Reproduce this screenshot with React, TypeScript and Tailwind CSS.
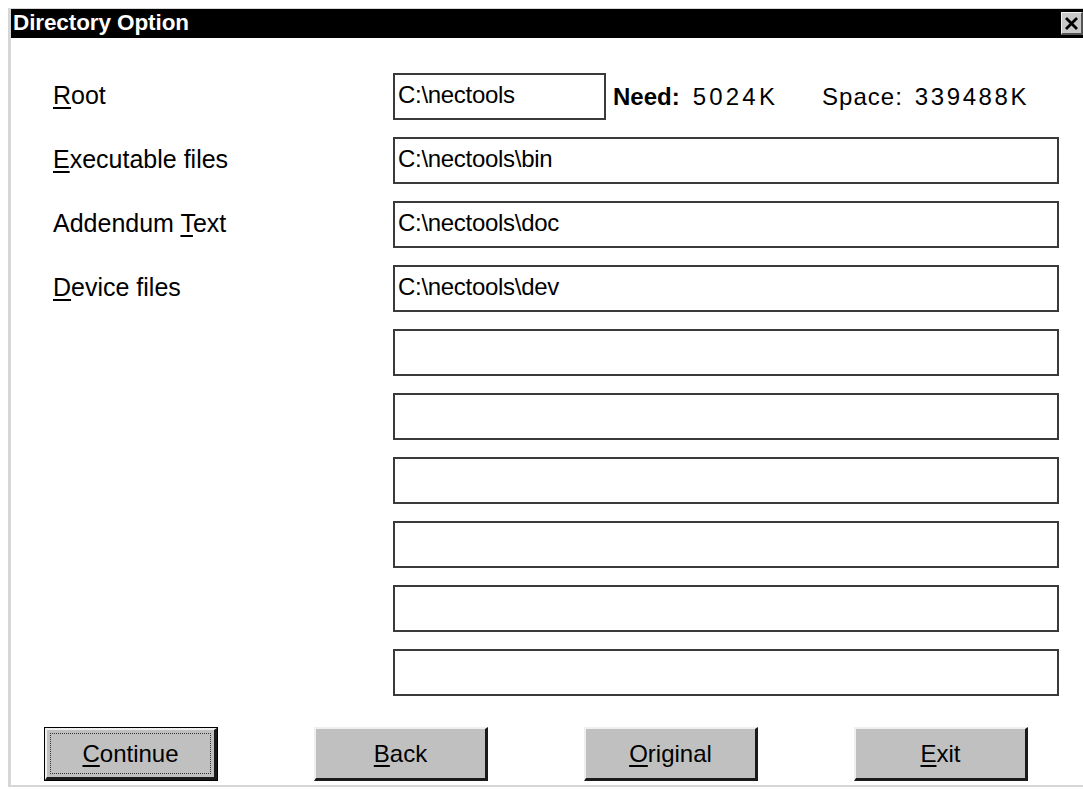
import React from 'react';

interface DirRow {
  label?: React.ReactNode;
  value: string;
}

// Letter with the keyboard-mnemonic underline
const Key: React.FC<{ children: React.ReactNode }> = ({ children }) => (
  <span className="underline underline-offset-[3px] decoration-[2px]">{children}</span>
);

const rows: DirRow[] = [
  { label: <><Key>E</Key>xecutable files</>, value: 'C:\\nectools\\bin' },
  { label: <>Addendum <Key>T</Key>ext</>, value: 'C:\\nectools\\doc' },
  { label: <><Key>D</Key>evice files</>, value: 'C:\\nectools\\dev' },
  { value: '' },
  { value: '' },
  { value: '' },
  { value: '' },
  { value: '' },
  { value: '' },
];

const PathBox: React.FC<{ value: string; wide?: boolean }> = ({ value, wide = true }) => (
  <div
    className={`${wide ? 'w-[666px]' : 'w-[213px]'} h-[47px] border-2 border-[#3a3a3a] bg-white px-[3px] pt-[6px] leading-[28px] text-[24px] text-black whitespace-nowrap tracking-[-0.3px]`}
  >
    {value}
  </div>
);

const DialogButton: React.FC<{ children: React.ReactNode; isDefault?: boolean }> = ({
  children,
  isDefault,
}) => (
  <button
    className={`w-[174px] h-[54px] bg-[#c0c0c0] text-[24px] text-black flex ${
      isDefault ? 'border border-black p-0' : ''
    }`}
  >
    <div className="flex-1 flex border-t-2 border-l-2 border-[#efefef] border-r-[3px] border-b-[3px] border-r-[#1a1a1a] border-b-[#1a1a1a]">
      <div
        className={`flex-1 flex items-center justify-center m-[3px] ${
          isDefault ? 'border border-dotted border-[#333]' : ''
        }`}
      >
        <span>{children}</span>
      </div>
    </div>
  </button>
);

const App: React.FC = () => {
  return (
    <div className="w-[1083px] h-[790px] bg-white overflow-hidden pt-[8px] pl-[8px] font-['Liberation_Sans',Arial,sans-serif]">
      <div className="h-[779px] flex flex-col border-t border-l-[3px] border-b-2 border-[#d6d6d6]">
        {/* Title bar */}
        <div className="h-[29px] bg-black flex items-center justify-between pl-[2px] pr-0">
          <span className="text-white font-bold text-[22.5px] leading-none tracking-[-0.1px]">
            Directory Option
          </span>
          <div className="w-[22px] h-[23px] bg-[#c8c8c8] border-t border-l border-[#f0f0f0] border-r-2 border-b-2 border-r-[#555] border-b-[#555] flex items-center justify-center">
            <svg width="15" height="15" viewBox="0 0 15 15">
              <path d="M2 2 L13 13 M13 2 L2 13" stroke="#000" strokeWidth="2.8" />
            </svg>
          </div>
        </div>

        {/* Path fields */}
        <div className="flex flex-col gap-[17px] pt-[35px]">
          <div className="flex items-start">
            <div className="w-[382px] pl-[42px] pt-[8px] leading-[28px] text-[25px] text-black">
              <Key>R</Key>oot
            </div>
            <PathBox value="C:\nectools" wide={false} />
            <div className="flex items-start pt-[10px] leading-[28px] text-[24px] text-black">
              <span className="ml-[7px] font-bold">Need:</span>
              <span className="ml-[13px] tracking-[3.2px]">5024K</span>
              <span className="ml-[44px] tracking-[1px]">Space:</span>
              <span className="ml-[12px] tracking-[2.6px]">339488K</span>
            </div>
          </div>
          {rows.map((row, i) => (
            <div key={i} className="flex items-start">
              <div className="w-[382px] pl-[42px] pt-[8px] leading-[28px] text-[25px] text-black">
                {row.label}
              </div>
              <PathBox value={row.value} />
            </div>
          ))}
        </div>

        {/* Actions */}
        <div className="flex gap-[96px] pl-[33px] pt-[31px]">
          <DialogButton isDefault>
            <Key>C</Key>ontinue
          </DialogButton>
          <DialogButton>
            <Key>B</Key>ack
          </DialogButton>
          <DialogButton>
            <Key>O</Key>riginal
          </DialogButton>
          <DialogButton>
            <Key>E</Key>xit
          </DialogButton>
        </div>
      </div>
    </div>
  );
};

export default App;
